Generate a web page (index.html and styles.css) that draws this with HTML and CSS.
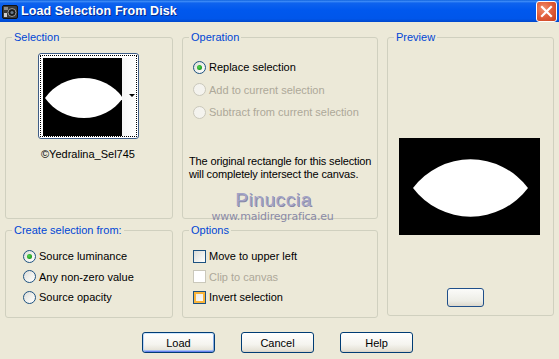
FILE: index.html
```html
<!DOCTYPE html>
<html>
<head>
<meta charset="utf-8">
<link rel="stylesheet" href="styles.css">
</head>
<body>
<div class="window">
  <div class="titlebar">
    <svg class="app-icon" width="16" height="16" viewBox="0 0 16 16">
      <rect x="0.5" y="1.5" width="15" height="13" rx="1.5" fill="#3a3a3a" stroke="#111"/>
      <rect x="2" y="3" width="4" height="3" fill="#8a8a8a"/>
      <circle cx="10" cy="8.5" r="4" fill="#1a1a1a" stroke="#9a9a9a"/>
      <circle cx="10" cy="8.5" r="1.6" fill="#6a7a8a"/>
      <rect x="2" y="9" width="3" height="4" fill="#cfcfcf"/>
    </svg>
    <span class="title">Load Selection From Disk</span>
    <div class="close-btn">
      <svg width="13" height="13" viewBox="0 0 13 13"><path d="M2 2 L11 11 M11 2 L2 11" stroke="#fff" stroke-width="2.2" stroke-linecap="square"/></svg>
    </div>
  </div>

  <div class="content">
    <fieldset class="group g-selection">
      <legend>Selection</legend>
      <div class="group-body center">
        <div class="thumb">
          <div class="thumb-focus">
            <svg class="thumb-img" width="79" height="78" viewBox="0 0 79 78">
              <rect width="79" height="78" fill="#000"/>
              <path d="M2 40 A48 48 0 0 1 80 40 A48 48 0 0 1 2 40 Z" fill="#fff"/>
            </svg>
            <div class="thumb-strip"><span class="drop-arrow"></span></div>
          </div>
        </div>
        <div class="thumb-caption">©Yedralina_Sel745</div>
      </div>
    </fieldset>

    <fieldset class="group g-operation">
      <legend>Operation</legend>
      <div class="group-body op-body">
        <div class="opt-row"><span class="radio checked"></span><span>Replace selection</span></div>
        <div class="opt-row disabled"><span class="radio"></span><span>Add to current selection</span></div>
        <div class="opt-row disabled"><span class="radio"></span><span>Subtract from current selection</span></div>
        <p class="desc">The original rectangle for this selection<br>will completely intersect the canvas.</p>
      </div>
    </fieldset>

    <fieldset class="group g-preview">
      <legend>Preview</legend>
      <div class="group-body center">
        <svg class="preview-img" width="141" height="97" viewBox="0 0 141 97">
          <rect width="141" height="97" fill="#000"/>
          <path d="M14 50 A72 72 0 0 1 129 50 A72 72 0 0 1 14 50 Z" fill="#fff"/>
        </svg>
        <div class="mini-btn"></div>
      </div>
    </fieldset>

    <fieldset class="group g-create">
      <legend>Create selection from:</legend>
      <div class="group-body create-body">
        <div class="opt-row small"><span class="radio checked"></span><span>Source luminance</span></div>
        <div class="opt-row small"><span class="radio"></span><span>Any non-zero value</span></div>
        <div class="opt-row small"><span class="radio"></span><span>Source opacity</span></div>
      </div>
    </fieldset>

    <fieldset class="group g-options">
      <legend>Options</legend>
      <div class="group-body options-body">
        <div class="opt-row small"><span class="check"></span><span>Move to upper left</span></div>
        <div class="opt-row small disabled"><span class="check"></span><span>Clip to canvas</span></div>
        <div class="opt-row small"><span class="check hover"></span><span>Invert selection</span></div>
      </div>
    </fieldset>
  </div>

  <div class="buttons">
    <button class="btn default">Load</button>
    <button class="btn">Cancel</button>
    <button class="btn">Help</button>
  </div>

  <div class="watermark">
    <div class="wm-name">Pinuccia</div>
    <div class="wm-url">www.maidiregrafica.eu</div>
  </div>
</div>
</body>
</html>
```

FILE: styles.css
```css
* { box-sizing: border-box; }
html, body { margin: 0; padding: 0; }
body {
  background: #ECE9D8;
  font-family: "Liberation Sans", Arial, sans-serif;
  font-size: 11px;
  color: #000;
}
.window {
  position: relative;
  width: 559px;
  height: 359px;
  background: #ECE9D8;
  overflow: hidden;
}
.titlebar {
  height: 22px;
  display: flex;
  align-items: center;
  padding: 0 2px 0 2px;
  background: linear-gradient(#0A5FDB 0%, #3D8BF7 6%, #0E63EE 14%, #0058EE 45%, #0056EA 85%, #0048CC 100%);
}
.app-icon { flex: none; margin-top: 1px; }
.title {
  margin-left: 3px;
  color: #fff;
  font-weight: bold;
  font-size: 12.5px;
  letter-spacing: 0.1px;
  text-shadow: 1px 1px 0 #0A2A8A;
  flex: 1;
}
.close-btn {
  width: 21px;
  height: 21px;
  margin-top: 1px;
  border: 1px solid #fff;
  border-radius: 3px;
  background: radial-gradient(circle at 35% 35%, #F0916E 0%, #E2603C 45%, #C8401E 100%);
  display: flex;
  align-items: center;
  justify-content: center;
}

.content {
  display: grid;
  grid-template-columns: 168px 196px 167px;
  grid-template-rows: 188px 94px;
  column-gap: 9px;
  row-gap: 5px;
  padding: 9px 0 0 5px;
}
.group {
  margin: 0;
  min-width: 0;
  border: 1px solid #D0D0BF;
  border-radius: 3px;
  padding: 0;
}
.group legend {
  color: #0046D5;
  padding: 0 2px;
  margin-left: 6px;
  line-height: 13px;
}
.group-body { height: 100%; }
.group-body.center { display: flex; flex-direction: column; align-items: center; }

.g-selection { grid-column: 1; grid-row: 1; }
.g-operation { grid-column: 2; grid-row: 1; }
.g-preview { grid-column: 3; grid-row: 1 / 3; margin-bottom: 2px; }
.g-create { grid-column: 1; grid-row: 2; }
.g-options { grid-column: 2; grid-row: 2; }

.op-body { padding: 12px 0 0 10px; }
.create-body { padding: 9px 0 0 17px; }
.options-body { padding: 9px 0 0 10px; }

.thumb {
  margin-top: 9px;
  margin-right: 2px;
  width: 101px;
  height: 86px;
  border: 1px solid #3F5D86;
  border-radius: 3px;
  background: #fff;
  padding: 1px;
}
.thumb-focus {
  height: 100%;
  border: 1px dotted #000;
  display: flex;
  padding: 2px 0 0 2px;
}
.thumb-img { display: block; flex: none; }
.thumb-strip {
  flex: 1;
  background: linear-gradient(to right, #f4f4f4, #fff);
  display: flex;
  align-items: center;
  justify-content: flex-end;
  padding-right: 1px;
}
.drop-arrow {
  width: 0; height: 0;
  border-left: 3px solid transparent;
  border-right: 3px solid transparent;
  border-top: 3px solid #000;
  margin-top: -3px;
}
.thumb-caption { margin-top: 9px; margin-right: 2px; }

.opt-row {
  display: flex;
  align-items: center;
  height: 22.5px;
  gap: 3px;
  white-space: nowrap;
}
.opt-row.small { height: 20.5px; }
.opt-row.disabled { color: #ACA899; }

.radio {
  flex: none;
  width: 13px;
  height: 13px;
  border-radius: 50%;
  border: 1px solid #1C5180;
  background: linear-gradient(135deg, #DCDCD7 0%, #F2F2EE 55%, #FFFFFF 100%);
  display: flex;
  align-items: center;
  justify-content: center;
}
.radio.checked::after {
  content: "";
  width: 5px;
  height: 5px;
  border-radius: 50%;
  background: radial-gradient(circle at 40% 40%, #55D451 0%, #21A121 60%, #1A8C1A 100%);
}
.opt-row.disabled .radio {
  border-color: #CAC8BB;
  background: #F4F3EE;
}

.check {
  flex: none;
  width: 13px;
  height: 13px;
  border: 1px solid #1C5180;
  background: linear-gradient(135deg, #DCDCD7 0%, #F0F0EC 55%, #FFFFFF 100%);
}
.check.hover {
  box-shadow: inset 0 0 0 2px #F9B43A;
  background: linear-gradient(135deg, #E8E8E2, #FFFFFF);
}
.opt-row.disabled .check {
  border-color: #CAC8BB;
  background: #fff;
}

.desc {
  margin: 31px 0 0 -4px;
  line-height: 13px;
  white-space: nowrap;
  letter-spacing: -0.15px;
}

.preview-img { display: block; margin-top: 94px; margin-left: -2px; }
.mini-btn {
  margin-top: 53px;
  margin-left: -11px;
  width: 37px;
  height: 19px;
  border: 1px solid #1F4F8A;
  border-radius: 3px;
  background: linear-gradient(#FBFBF9, #EDEDE6 70%, #DCD8CC);
}

.buttons {
  display: flex;
  justify-content: center;
  gap: 26px;
  margin-top: 14px;
  padding-right: 4px;
}
.btn {
  width: 73px;
  height: 21px;
  padding: 0;
  font-family: "Liberation Sans", Arial, sans-serif;
  font-size: 11px;
  color: #000;
  border: 1px solid #003C74;
  border-radius: 3px;
  background: linear-gradient(#FFFFFF 0%, #F5F4EF 60%, #E6E3D8 90%, #D6D0C5 100%);
}
.btn.default {
  box-shadow: inset 0 1px 0 #CEE7FF, inset 1px 0 0 #BCD4F6, inset -1px 0 0 #89ADE4, inset 0 -1px 0 #6982EE, inset 0 -2px 0 #A4C0F3;
}

.watermark {
  position: absolute;
  left: 205px;
  top: 189px;
  width: 135px;
  text-align: center;
  pointer-events: none;
}
.wm-name {
  font-family: "Liberation Sans", Arial, sans-serif;
  font-size: 19px;
  line-height: 21px;
  color: #A3A3C6;
  text-shadow: 1px 1px 0 #8787A6;
  letter-spacing: 0.6px;
  margin-left: 2px;
}
.wm-url {
  font-family: "DejaVu Sans", sans-serif;
  font-size: 11px;
  line-height: 12px;
  color: #8A8AA6;
  letter-spacing: -0.2px;
  margin-top: 1px;
}
```
